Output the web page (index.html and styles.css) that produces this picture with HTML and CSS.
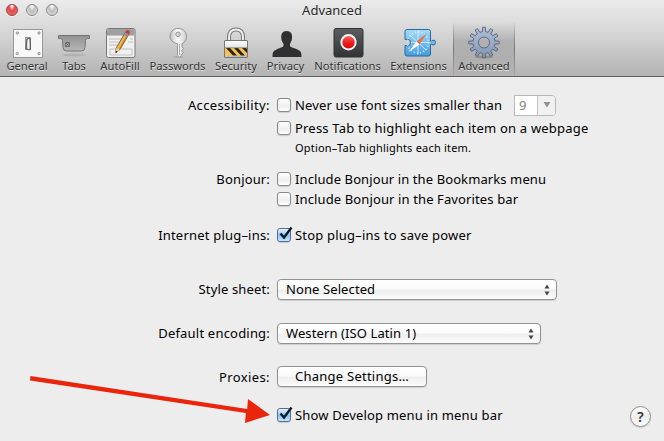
FILE: index.html
```html
<!DOCTYPE html>
<html lang="en">
<head>
<meta charset="utf-8">
<title>Advanced</title>
<link rel="stylesheet" href="styles.css">
</head>
<body>
<div class="window">
<header class="chrome">
  <div class="titlebar">
    <div class="lights"><i class="light close"></i><i class="light"></i><i class="light"></i></div>
    <h1>Advanced</h1>
  </div>
  <nav class="toolbar">
    <div class="tool"><svg viewBox="0 0 34 34"><defs><linearGradient id="sw" x2="1"><stop stop-color="#888"/><stop offset=".5" stop-color="#fff"/><stop offset="1" stop-color="#aaa"/></linearGradient></defs><rect x="3.500" y="4.500" width="29" height="28" fill="#f8f8f8" stroke="#999"/><g fill="#ccc" stroke="#777" stroke-width=".6"><circle cx="7.300" cy="8" r="1.200"/><circle cx="29" cy="8" r="1.200"/><circle cx="7.300" cy="28.500" r="1.200"/><circle cx="29" cy="28.500" r="1.200"/></g><path d="M15.500 12.500h5v12h-5z" fill="#bbb" stroke="#666" stroke-width=".6"/><path d="M17 14l3-1 .5 8-.5 4-4-1z" fill="url(#sw)" stroke="#444" stroke-width=".8"/></svg><span>General</span></div>
    <div class="tool"><svg viewBox="0 0 34 34"><defs><linearGradient id="tab" y2="1" x2="0"><stop stop-color="#929292"/><stop offset="1" stop-color="#b7b7b7"/></linearGradient></defs><ellipse cx="17" cy="30" rx="12" ry="1.500" fill="#999" opacity=".4"/><path d="M1.500 10.500h31v3h-2q-1.500 0-2 2l-.5 7q-.3 3.500-3.500 3.500h-15q-3.200 0-3.500-3.500l-.5-7q-.5-2-2-2h-2z" fill="url(#tab)" stroke="#747474"/><path d="M8.500 17.500h4v4h-4zM9 18l3 3m0-3l-3 3" fill="none" stroke="#555" stroke-width=".7"/></svg><span>Tabs</span></div>
    <div class="tool"><svg viewBox="0 0 34 34"><rect x="3.500" y="3.500" width="28.500" height="29" rx="2" fill="#f0f0f0" stroke="#777"/><path d="M4 10V6q0-2 2-2h23.500q2 0 2 2v4z" fill="#a0a0a0"/><path d="M3.500 10.500h28.500M6 14h17M6 17h15M6 20h12M27 14h3M25 17h5M7 24h22v6H7z" fill="none" stroke="#bbb" stroke-width=".9"/><g transform="translate(.5 1) rotate(30 18 17)"><path d="M16 5h4v18L18 28.500 16 24z" fill="#f3b744" stroke="#66594c" stroke-width=".8"/><path d="M18.700 8H20v15h-1.300z" fill="#bd7923"/><path d="M16 4q0-1.500 2-1.500T20 4v2h-4z" fill="#d7322d"/><path d="M16 6h4v3h-4z" fill="#8a94a7"/><path d="M16 24h4l-2 4.500z" fill="#edcc9b"/><path d="M17 26.500h2l-1 2z" fill="#222"/></g></svg><span>AutoFill</span></div>
    <div class="tool"><svg viewBox="0 0 34 34"><defs><linearGradient id="key" x2="1"><stop stop-color="#bbb"/><stop offset=".45" stop-color="#fff"/><stop offset="1" stop-color="#ccc"/></linearGradient></defs><ellipse cx="17" cy="32" rx="5" ry="1" fill="#999" opacity=".5"/><path fill-rule="evenodd" d="M17 3.500c6 0 8.500 4 8.500 8 0 3.500-2 6-4.500 7.200v3l1.500 2-2 2 1.700 2-2 2 .3 1-2 1.500-2-2V18.700c-5-1.200-7.500-3.700-7.500-7.200 0-4 2.500-8 8-8zM17 7a2.300 2.300 0 1 0 0 4.600 2.300 2.300 0 1 0 0-4.600z" fill="url(#key)" stroke="#8d8d8d" stroke-width=".9"/><path d="M18.500 19v11" stroke="#aaa"/></svg><span>Passwords</span></div>
    <div class="tool"><svg viewBox="0 0 34 34"><defs><linearGradient id="body" y2="1" x2="0"><stop stop-color="#fff"/><stop offset="1" stop-color="#bbb"/></linearGradient></defs><path d="M10 16V12q0-7.500 7-7.500T24 12v4" fill="none" stroke="#777" stroke-width="4"/><path d="M10 16V12q0-7.500 7-7.500T24 12v4" fill="none" stroke="#eee" stroke-width="2"/><rect x="5.500" y="15.500" width="23" height="17" rx=".5" fill="url(#body)" stroke="#777"/><path d="M6 23h22v7.500H6z" fill="#f9c44c"/><path d="M7 23h4l7 7.500h-4zM15 23h4l7 7.500h-4zM23 23h4l1 1v4z" fill="#29251d"/><path d="M5.500 22.700h23" stroke="#777" stroke-width=".7"/></svg><span>Security</span></div>
    <div class="tool"><svg viewBox="0 0 34 34"><path d="M17.500 6c4.500 0 6 3 5.500 7 0 3-1.500 4-2 6v2c1 2 7 2.500 10 5 1.300 1 1.500 3.500 1.500 6h-29c0-2.500.2-5 1.500-6 3-2.500 8-3 9.500-5v-2c-.7-2-2.200-3-2.200-6-.3-4 1-7 5.200-7z" fill="#303030"/></svg><span>Privacy</span></div>
    <div class="tool"><svg viewBox="0 0 34 34"><defs><linearGradient id="nt" y2="1" x2="0"><stop stop-color="#5d5e61"/><stop offset="1" stop-color="#303236"/></linearGradient><linearGradient id="red" y2="1" x2="0"><stop stop-color="#ff6963"/><stop offset=".5" stop-color="#ed2024"/><stop offset="1" stop-color="#d6000a"/></linearGradient></defs><rect x="3" y="3.500" width="29" height="28.500" rx="2" fill="url(#nt)" stroke="#333"/><circle cx="17.500" cy="17.300" r="7.200" fill="url(#red)" stroke="#f5f5f5" stroke-width="2"/></svg><span>Notifications</span></div>
    <div class="tool"><svg viewBox="0 0 34 34"><defs><linearGradient id="ext" y2="1" x2="0"><stop stop-color="#a5dcfa"/><stop offset="1" stop-color="#439bdd"/></linearGradient></defs><path d="M5 4.500h21.500q2 0 2 2V16q1 .5 2.500-.8 2.500-.5 2.500 2.300T31 20q-1.500-1.300-2.500-.5V29q0 2-2 2H5q-2 0-2-2v-8.500q1 0 2.500.5 3-.5 3-3.500t-3-3.500q-1.500 1-2.500.5V6.500q0-2 2-2z" fill="url(#ext)" stroke="#286b9f"/><g fill="none" stroke="#ddf3ff"><circle cx="16" cy="17.500" r="10.500" stroke-width="1.500" stroke-dasharray="1 2.300"/><path d="M16 5.500v24M9 17.500h19M8 10l16 15" stroke-width=".8"/></g><path d="M25 8l-7.500 11.500-3-3z" fill="#ed7045"/><path d="M6.500 27l8-10.500 3 3z" fill="#fff"/></svg><span>Extensions</span></div>
    <div class="tool selected"><svg viewBox="0 0 34 34"><defs><linearGradient id="gear" y2="1" x2="0"><stop stop-color="#b0c1dc"/><stop offset="1" stop-color="#8294b4"/></linearGradient></defs><ellipse cx="17" cy="32" rx="9" ry="1.500" fill="#777" opacity=".6"/><path id="gear-shape" fill-rule="evenodd" fill="url(#gear)" stroke="#54627b" stroke-width=".9" d=""/></svg><span>Advanced</span></div>
  </nav>
</header>
<main class="form">
  <div class="row first"><label class="s40">Accessibility:</label><i class="check"></i><span class="t s15">Never use font sizes smaller than</span><div class="combo"><span>9</span><b><svg viewBox="0 0 8 6"><path d="M.5 0h7L4 5.500z"/></svg></b></div></div>
  <div class="row press"><label></label><i class="check"></i><span class="t s20">Press Tab to highlight each item on a webpage</span></div>
  <div class="row hint"><label></label><span class="t s20">Option–Tab highlights each item.</span></div>
  <div class="row bonjour"><label class="s15">Bonjour:</label><i class="check"></i><span class="t s10">Include Bonjour in the Bookmarks menu</span></div>
  <div class="row"><label></label><i class="check"></i><span class="t s12">Include Bonjour in the Favorites bar</span></div>
  <div class="row plug"><label class="s20">Internet plug–ins:</label><i class="check on"><svg viewBox="0 0 16 16"><path d="M3.500 7.500L7 11.500 14.500 1.500"/></svg></i><span class="t s20">Stop plug–ins to save power</span></div>
  <div class="row style"><label class="s15">Style sheet:</label><div class="button select wide"><span class="s10">None Selected</span><svg viewBox="0 0 6 12"><path d="M.5 4.500L3 .5l2.500 4zM.5 7.500h5L3 11.500z"/></svg></div></div>
  <div class="row encoding"><label class="s20">Default encoding:</label><div class="button select"><span class="s10">Western (ISO Latin 1)</span><svg viewBox="0 0 6 12"><path d="M.5 4.500L3 .5l2.500 4zM.5 7.500h5L3 11.500z"/></svg></div></div>
  <div class="row proxies"><label class="s40">Proxies:</label><div class="button push"><span class="s25">Change Settings…</span></div></div>
  <div class="row develop"><label></label><i class="check on"><svg viewBox="0 0 16 16"><path d="M3.500 7.500L7 11.500 14.500 1.500"/></svg></i><span class="t s17">Show Develop menu in menu bar</span><div class="help">?</div></div>
</main>
<svg class="arrow" viewBox="0 0 240 50"><path d="M.5 2L0 6.500 215.800 39l-.8 10L240 41l-22-16-.8 10z"/></svg>
</div>
<script src="gear.js"></script>
</body>
</html>
```
FILE: styles.css
```css
* { box-sizing: border-box; }
body { margin: 0; font: 13px/20px "Noto Sans", sans-serif; color: #000; }
.window { position: relative; width: 664px; height: 441px; background: #ededed; overflow: hidden; }
.chrome { height: 77px; background: linear-gradient(#ebebeb, #d5d5d5 45%, #b3b3b3); border-bottom: 1px solid #626262; }
.titlebar { height: 25px; display: grid; grid-template-columns: 80px 504px 80px; }
.lights { display: flex; gap: 8px; padding: 4px 0 0 6px; }
.light { width: 12px; height: 12px; border-radius: 50%; border: 1px solid #858585; background: radial-gradient(ellipse at 50% 0, #fff 10%, #bbb 45%, #eee 95%); box-shadow: 0 1px #eee; }
.light.close { border-color: #983d3d; background: radial-gradient(ellipse at 50% 0, #fff 8%, #df4449 42%, #ff7b7b 95%); }
h1 { margin: 0; font-size: 13px; line-height: 20px; font-weight: 400; text-align: center; color: #292929; text-shadow: 0 1px #eee; }
.toolbar { display: grid; grid-template-columns: 48px 46px 46px 69px 48px 51px 73px 69px 62px; height: 51px; padding-left: 3px; }
.tool { display: flex; flex-direction: column; align-items: center; font-size: 11.2px; line-height: 14px; color: #303030; text-shadow: 0 1px #e4e4e4; }
.tool svg { width: 34px; height: 34px; flex: none; }
.tool span { white-space: nowrap; }
.selected { margin-top: -3px; padding-top: 3px; background: linear-gradient(transparent, rgba(70,70,70,.22) 35%, rgba(70,70,70,.16) 65%, transparent); border: 1px solid; border-width: 0 1px; border-image: linear-gradient(transparent, #777 50%, #aaa) 1; }
.row { display: flex; align-items: center; height: 20px; }
.row label { width: 270px; margin-right: 7px; text-align: right; flex: none; }
.first { margin-top: 18px; }
.press { margin-top: 3px; }
.hint { font-size: 11px; }
.hint .t { margin-left: 18px; }
.bonjour { margin-top: 11px; }
.plug { margin-top: 16px; }
.style { margin-top: 34px; height: 21px; }
.encoding { margin-top: 23px; height: 21px; }
.proxies { margin-top: 22px; height: 21px; }
.develop { margin-top: 18px; }
.check { flex: none; width: 14px; height: 14px; margin-right: 4px; border: 1px solid #898989; border-radius: 3px; background: linear-gradient(#fff, #eee 60%, #fff); box-shadow: 0 1px 1px #ccc; }
.check.on { background: linear-gradient(#e6f3ff, #8fc3f2 55%, #c2eaff); border-color: #596b99; }
.check svg { display: block; width: 16px; height: 16px; margin: -3px 0 0 -1px; fill: none; stroke: #091c2b; stroke-width: 2.4; }
.t, .button span, label { white-space: nowrap; }
.s10 { letter-spacing: .1px; }
.s12 { letter-spacing: .12px; }
.s15 { letter-spacing: .15px; }
.s17 { letter-spacing: .17px; }
.s20 { letter-spacing: .2px; }
.s25 { letter-spacing: .25px; }
.s40 { letter-spacing: .38px; }
.combo { display: flex; width: 42px; height: 21px; margin-left: auto; margin-right: 108px; color: #858585; border: 1px solid #b9b9b9; border-radius: 0 4px 4px 0; background: #fff; }
.combo span { width: 23px; padding-left: 4px; border-right: 1px solid #c4c4c4; line-height: 19px; font-size: 13px; }
.combo b { flex: 1; background: #f1f1f1; border-radius: 0 3px 3px 0; display: flex; align-items: center; justify-content: center; }
.combo svg { width: 8px; height: 6px; fill: #929292; }
.button { width: 264px; height: 21px; border: 1px solid #929292; border-radius: 4px; background: linear-gradient(#fff, #fafafa 48%, #eee 52%, #fbfbfb); display: flex; align-items: center; box-shadow: 0 1px 1px #ccc; }
.button span { padding-bottom: 1px; }
.style label, .encoding label { padding-bottom: 1px; }
.wide { width: 280px; }
.select { justify-content: space-between; padding: 0 6px 0 8px; }
.select svg { width: 6px; height: 12px; fill: #444; }
.push { width: 150px; justify-content: center; }
.help { width: 21px; height: 21px; margin-left: auto; margin-right: 13px; border: 1px solid #8c8c8c; border-radius: 50%; background: linear-gradient(#fff, #eee 55%, #fff); text-align: center; line-height: 19px; font-size: 14px; font-weight: 600; color: #333; box-shadow: 0 1px 1px #ccc; position: relative; top: 1px; }
.arrow { position: absolute; left: 30px; top: 374px; width: 240px; height: 50px; fill: #e9260c; overflow: visible; pointer-events: none; }
```
FILE: gear.js
```js
// Twelve-tooth gear with an open centre
const points = [];
for (let i = 0; i < 12; i++) {
  const a = i * 30 - 90;
  [[-8, 11], [-5, 15.3], [5, 15.3], [8, 11]].forEach(([d, r]) => {
    const t = (a + d) * Math.PI / 180;
    points.push((17 + r * Math.cos(t)).toFixed(2) + " " + (17.5 + r * Math.sin(t)).toFixed(2));
  });
}
document.getElementById("gear-shape").setAttribute("d",
  "M" + points.join("L") + "ZM17 12a5.500 5.500 0 1 0 0 11 5.500 5.500 0 1 0 0-11Z");
```
